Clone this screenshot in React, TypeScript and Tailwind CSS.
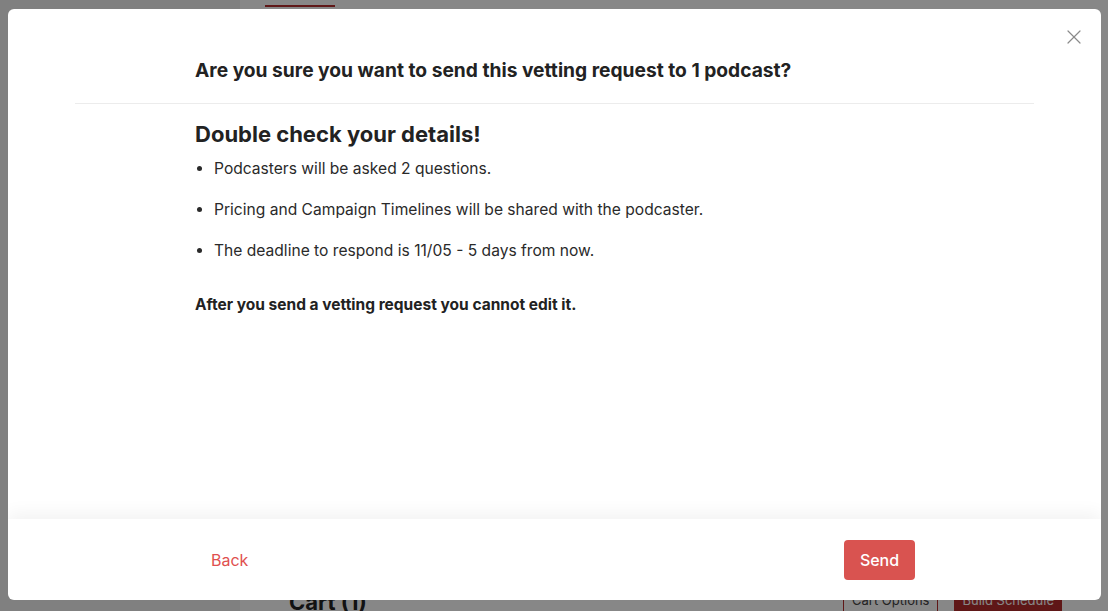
import { X } from "lucide-react";

const details = [
  "Podcasters will be asked 2 questions.",
  "Pricing and Campaign Timelines will be shared with the podcaster.",
  "The deadline to respond is 11/05 - 5 days from now.",
];

function BackgroundPage() {
  return (
    <div className="flex h-[611px] w-full bg-white">
      {/* Sidebar */}
      <div className="w-[240px] shrink-0 bg-[#f2f2f2]" />
      {/* Main */}
      <div className="flex flex-1 flex-col justify-between">
        <div className="ml-[25px] mt-[5px] h-[2px] w-[70px] bg-[#b32d2d]" />
        <div className="flex items-center justify-between pl-[49px] pr-[46px]">
          <h2 className="translate-y-[8px] font-['Inter',sans-serif] text-[22px] font-bold text-[#222]">
            Cart (1)
          </h2>
          <div className="flex translate-y-[6px] gap-4">
            <button className="border border-[#b32d2d] px-2 py-1 font-['Inter',sans-serif] text-[13px] text-[#444]">
              Cart Options
            </button>
            <button className="bg-[#b32d2d] px-2 py-1 font-['Inter',sans-serif] text-[13px] text-white">
              Build Schedule
            </button>
          </div>
        </div>
      </div>
    </div>
  );
}

export default function App() {
  return (
    <div className="relative h-[611px] w-full overflow-hidden font-['Inter',sans-serif]">
      <BackgroundPage />

      {/* Overlay */}
      <div className="absolute inset-0 bg-black/[0.47]" />

      {/* Modal */}
      <div className="absolute bottom-[11px] left-[8px] right-[7px] top-[9px] flex flex-col overflow-hidden rounded-[6px] bg-white">
        <button className="absolute right-[15px] top-[16px] text-[#8a8a8a]">
          <X className="h-6 w-6" strokeWidth={1.2} />
        </button>

        <div className="flex-1 px-[67px]">
          {/* Header */}
          <div className="border-b border-[#ececec] pb-[19px] pl-[120px] pt-[47px]">
            <h1 className="text-[19.2px] font-bold leading-[28px] text-[#222]">
              Are you sure you want to send this vetting request to 1 podcast?
            </h1>
          </div>

          {/* Body */}
          <div className="pl-[120px] pt-[16px]">
            <h2 className="text-[22px] font-bold leading-[28px] text-[#222]">
              Double check your details!
            </h2>
            <ul className="mt-[9px] flex list-disc flex-col gap-[17px] pl-[19px] text-[15.6px] leading-[24px] text-[#2a2a2a]">
              {details.map((item) => (
                <li key={item}>{item}</li>
              ))}
            </ul>
            <p className="mt-[30px] text-[15.5px] font-bold leading-[24px] text-[#222]">
              After you send a vetting request you cannot edit it.
            </p>
          </div>
        </div>

        {/* Footer */}
        <div className="flex h-[81px] shrink-0 items-center justify-between pl-[187px] pr-[186px] shadow-[0_-6px_16px_rgba(0,0,0,0.05)]">
          <button className="px-4 text-[16px] text-[#e0504f]">Back</button>
          <button className="h-[40px] w-[71px] rounded-[4px] bg-[#d95350] text-[16px] font-medium text-white">
            Send
          </button>
        </div>
      </div>
    </div>
  );
}
